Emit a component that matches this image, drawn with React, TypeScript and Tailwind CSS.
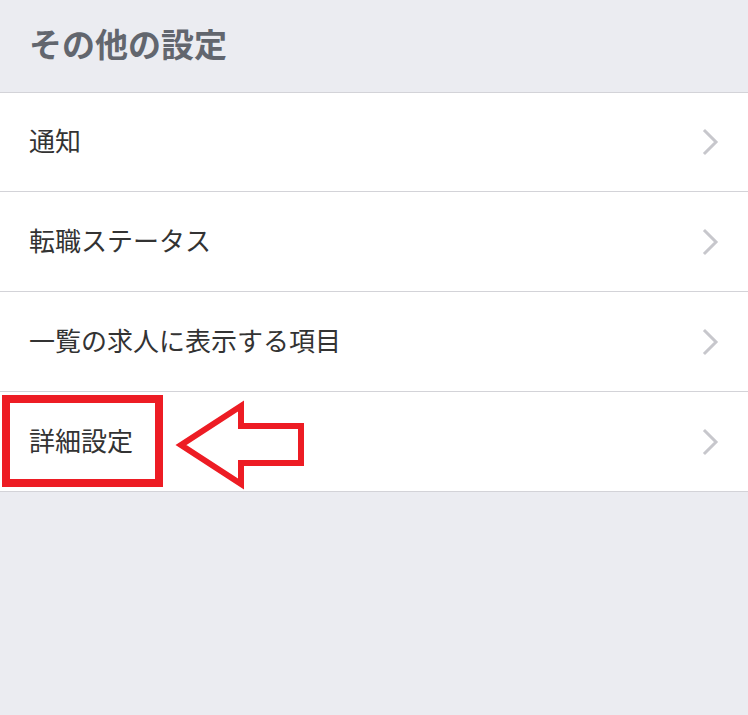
import React from "react";

const items = ["通知", "転職ステータス", "一覧の求人に表示する項目", "詳細設定"];

function Chevron() {
  return (
    <svg width="18" height="28" viewBox="0 0 18 28" fill="none">
      <path d="M3 3 L14 14 L3 25" stroke="#c7c7cc" strokeWidth="3" strokeLinecap="square" strokeLinejoin="miter" />
    </svg>
  );
}

export default function App() {
  return (
    <div
      className="relative w-[748px] h-[715px] bg-[#ebecf1] overflow-hidden"
      style={{ fontFamily: '"Noto Sans CJK JP", "Noto Sans", sans-serif' }}
    >
      <div className="h-[92px] flex items-center pl-[29px] pb-[5px]">
        <h1 className="text-[33px] font-bold text-[#62666e] leading-none">その他の設定</h1>
      </div>
      <div className="bg-white border-t border-b border-[#d3d3d8]">
        {items.map((t, i) => (
          <div
            key={t}
            className={`flex items-center justify-between pl-[29px] pr-[28px] ${i > 0 ? "h-[100px] border-t border-[#d3d3d8]" : "h-[98px]"}`}
          >
            <span className="text-[26px] text-[#333333] leading-none pb-[4px]">{t}</span>
            <Chevron />
          </div>
        ))}
      </div>

      <div className="absolute left-[2px] top-[395px] w-[161px] h-[92px] border-[8px] border-[#ed1c24]" />
      <svg className="absolute left-0 top-0" width="748" height="715" viewBox="0 0 748 715">
        <polygon
          points="181,445 241,406 241,426 301,426 301,463 241,463 241,484"
          fill="none"
          stroke="#ed1c24"
          strokeWidth="6"
          strokeLinejoin="miter"
        />
      </svg>
    </div>
  );
}
